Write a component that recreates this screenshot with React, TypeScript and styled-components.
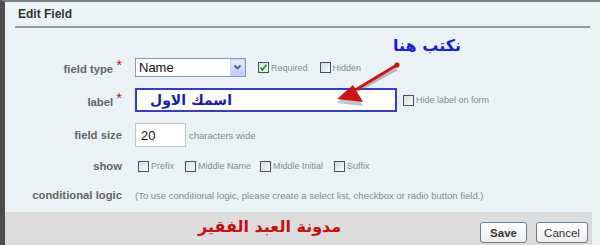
import React from "react";
import styled, { createGlobalStyle } from "styled-components";

const GlobalStyle = createGlobalStyle`
  html, body {
    margin: 0;
    padding: 0;
    background: #eaf2f5;
  }
  body {
    font-family: "Liberation Sans", Arial, sans-serif;
  }
`;

const Panel = styled.div`
  position: relative;
  width: 600px;
  height: 245px;
  box-sizing: border-box;
  border-top: 2px solid #7d7d7d;
  border-left: 5px solid #4d4d4d;
  background: #eaf2f5;
  display: flex;
  flex-direction: column;
  overflow: hidden;
`;

const Header = styled.div`
  margin: 0 10px 0 10px;
  height: 24px;
  border-bottom: 2px solid #9a9a9a;
  display: flex;
  align-items: center;
  padding-left: 3px;
  font-size: 12px;
  font-weight: bold;
  color: #333;
`;

const Form = styled.div`
  padding-top: 27px;
  display: flex;
  flex-direction: column;
`;

const Row = styled.div<{ $h: number }>`
  height: ${(p) => p.$h}px;
  display: grid;
  grid-template-columns: 117px 1fr;
  column-gap: 13px;
  align-items: center;
`;

const Label = styled.div`
  text-align: right;
  font-size: 11.3px;
  font-weight: bold;
  color: #666;
  white-space: nowrap;
`;

const Star = styled.span`
  color: #cc1111;
  font-size: 15px;
  font-weight: normal;
  margin-left: 3px;
  position: relative;
  top: -3px;
`;

const Controls = styled.div`
  display: flex;
  align-items: center;
`;

const Select = styled.div`
  width: 111px;
  height: 19px;
  box-sizing: border-box;
  border: 1px solid #7f9db9;
  background: #fff;
  display: flex;
  align-items: center;
  justify-content: space-between;
  font-size: 13px;
  color: #111;
  padding-left: 3px;
`;

const SelectBtn = styled.div`
  width: 15px;
  height: 17px;
  box-sizing: border-box;
  border: 1px solid #c3d3fd;
  background: linear-gradient(#e4ecfd, #bccdf7);
  display: flex;
  align-items: center;
  justify-content: center;
`;

const Check = styled.span<{ $gap?: number }>`
  display: inline-flex;
  align-items: center;
  margin-left: ${(p) => p.$gap ?? 0}px;
  font-size: 9px;
  color: #8a8a8a;
  white-space: nowrap;
`;

const Box = styled.span`
  width: 11px;
  height: 11px;
  box-sizing: border-box;
  border: 1px solid #34557a;
  background: linear-gradient(135deg, #dcdcd5, #fbfbf9);
  margin-right: 2px;
  display: inline-flex;
  align-items: center;
  justify-content: center;
`;

const TextInput = styled.div<{ $w: number; $blue?: boolean }>`
  width: ${(p) => p.$w}px;
  height: 24px;
  box-sizing: border-box;
  background: #fff;
  border: ${(p) => (p.$blue ? "2px solid #3a3ad0" : "1px solid #c4c4c4")};
  display: flex;
  align-items: center;
  padding-left: 5px;
  font-size: 13px;
  color: #111;
`;

const ArabicBlue = styled.span`
  font-family: "DejaVu Sans", "Noto Sans", sans-serif;
  font-weight: bold;
  font-size: 14px;
  color: #1a1ab0;
  direction: rtl;
  margin-left: 8px;
`;

const Hint = styled.span<{ $gap?: number }>`
  font-size: 9.5px;
  color: #8a8a8a;
  margin-left: ${(p) => p.$gap ?? 0}px;
  white-space: nowrap;
`;

const Footer = styled.div`
  margin-top: 4px;
  margin-right: 8px;
  flex: 1;
  background: #dcdcdc;
  display: flex;
  align-items: center;
  padding-right: 4px;
`;

const FooterText = styled.div`
  margin-left: 193px;
  font-family: "DejaVu Sans", "Noto Sans", sans-serif;
  font-weight: bold;
  font-size: 16px;
  color: #c41010;
  direction: rtl;
  flex: 1;
  text-align: left;
  padding-bottom: 4px;
`;

const Button = styled.button<{ $w: number; $bold?: boolean }>`
  width: ${(p) => p.$w}px;
  height: 21px;
  margin-left: 9px;
  margin-top: 8px;
  border: 1px solid #6c7c8c;
  border-radius: 3px;
  background: linear-gradient(#ffffff, #eeeeee);
  font-family: "Liberation Sans", Arial, sans-serif;
  font-size: 11.5px;
  font-weight: ${(p) => (p.$bold ? "bold" : "normal")};
  color: #333;
  padding: 0;
`;

const Note = styled.div`
  position: absolute;
  left: 388px;
  top: 34px;
  font-family: "DejaVu Sans", "Noto Sans", sans-serif;
  font-weight: bold;
  font-size: 16px;
  color: #1a1ad8;
  direction: rtl;
`;

const ArrowSvg = styled.svg`
  position: absolute;
  left: 320px;
  top: 55px;
`;

function CheckItem({ label, checked, gap }: { label: string; checked?: boolean; gap?: number }) {
  return (
    <Check $gap={gap}>
      <Box>
        {checked && (
          <svg width="9" height="9" viewBox="0 0 9 9">
            <path d="M1.5 4.5 L3.5 6.8 L7.5 1.8" stroke="#1f9a1f" strokeWidth="1.8" fill="none" />
          </svg>
        )}
      </Box>
      {label}
    </Check>
  );
}

export default function App() {
  return (
    <>
      <GlobalStyle />
      <Panel>
        <Header>Edit Field</Header>
        <Form>
          <Row $h={25}>
            <Label>
              field type<Star>*</Star>
            </Label>
            <Controls>
              <Select>
                Name
                <SelectBtn>
                  <svg width="9" height="7" viewBox="0 0 9 7">
                    <path d="M1.5 1.5 L4.5 4.5 L7.5 1.5" stroke="#4d6185" strokeWidth="1.8" fill="none" />
                  </svg>
                </SelectBtn>
              </Select>
              <CheckItem label="Required" checked gap={12} />
              <CheckItem label="Hidden" gap={12} />
            </Controls>
          </Row>
          <Row $h={40}>
            <Label>
              label<Star>*</Star>
            </Label>
            <Controls>
              <TextInput $w={262} $blue>
                <ArabicBlue>اسمك الاول</ArabicBlue>
              </TextInput>
              <CheckItem label="Hide label on form" gap={6} />
            </Controls>
          </Row>
          <Row $h={30}>
            <Label>field size</Label>
            <Controls>
              <TextInput $w={51}>20</TextInput>
              <Hint $gap={3}>characters wide</Hint>
            </Controls>
          </Row>
          <Row $h={32}>
            <Label>show</Label>
            <Controls>
              <CheckItem label="Prefix" gap={3} />
              <CheckItem label="Middle Name" gap={11} />
              <CheckItem label="Middle Initial" gap={9} />
              <CheckItem label="Suffix" gap={11} />
            </Controls>
          </Row>
          <Row $h={26}>
            <Label>conditional logic</Label>
            <Controls>
              <Hint>
                (To use conditional logic, please create a select list, checkbox or radio button field.)
              </Hint>
            </Controls>
          </Row>
        </Form>
        <Footer>
          <FooterText>مدونة العبد الفقير</FooterText>
          <Button $w={47} $bold>
            Save
          </Button>
          <Button $w={52}>Cancel</Button>
        </Footer>
        <Note>نكتب هنا</Note>
        <ArrowSvg width="80" height="55" viewBox="0 0 80 55">
          <g transform="translate(2,3)" opacity="0.35">
            <line x1="70" y1="9" x2="30" y2="31" stroke="#555" strokeWidth="3" />
            <polygon points="10,43 25,28 36,46" fill="#555" />
          </g>
          <line x1="72" y1="8" x2="32" y2="32" stroke="#cc1414" strokeWidth="3" strokeLinecap="round" />
          <circle cx="72" cy="8" r="2.6" fill="#cc1414" />
          <polygon points="12,42 28,28 38,45" fill="#cc1414" />
        </ArrowSvg>
      </Panel>
    </>
  );
}
